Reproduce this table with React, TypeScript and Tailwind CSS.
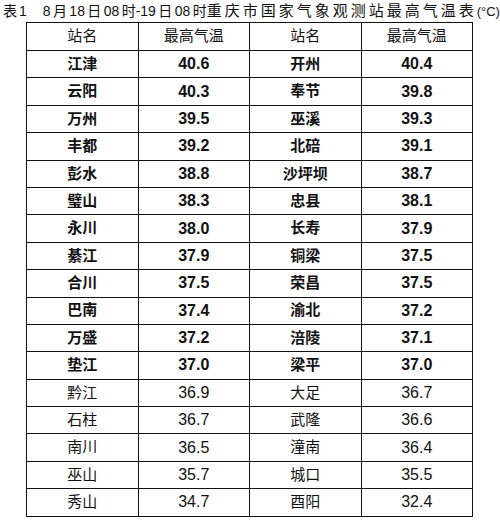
import React from "react";

const rows: [string, string, string, string, boolean][] = [
  ["江津", "40.6", "开州", "40.4", true],
  ["云阳", "40.3", "奉节", "39.8", true],
  ["万州", "39.5", "巫溪", "39.3", true],
  ["丰都", "39.2", "北碚", "39.1", true],
  ["彭水", "38.8", "沙坪坝", "38.7", true],
  ["璧山", "38.3", "忠县", "38.1", true],
  ["永川", "38.0", "长寿", "37.9", true],
  ["綦江", "37.9", "铜梁", "37.5", true],
  ["合川", "37.5", "荣昌", "37.5", true],
  ["巴南", "37.4", "渝北", "37.2", true],
  ["万盛", "37.2", "涪陵", "37.1", true],
  ["垫江", "37.0", "梁平", "37.0", true],
  ["黔江", "36.9", "大足", "36.7", false],
  ["石柱", "36.7", "武隆", "36.6", false],
  ["南川", "36.5", "潼南", "36.4", false],
  ["巫山", "35.7", "城口", "35.5", false],
  ["秀山", "34.7", "酉阳", "32.4", false],
];

const cell = "border border-[#111] p-0";

export default function App() {
  return (
    <div
      className="w-[500px] h-[525px] bg-white text-[#111] overflow-hidden"
      style={{ fontFamily: '"Liberation Sans", "Noto Sans CJK SC", sans-serif' }}
    >
      <div className="h-[22px] pl-[3px] text-[14px] leading-[22px] whitespace-nowrap">
        <span>表</span>
        <span className="ml-[2px]">1</span>
        <span className="ml-[16px] [word-spacing:-1.5px]">8 月 18 日 08 时-19 日 08 时</span>
        <span className="text-[15px] tracking-[3px]">重庆市国家气象观测站最高气温表</span>
        <span className="text-[13px]">(°C)</span>
      </div>
      <table className="ml-[26px] w-[447px] table-fixed border-collapse text-center">
        <tbody>
          <tr className="h-[28px] text-[15px]">
            <td className={cell}>站名</td>
            <td className={cell}>最高气温</td>
            <td className={cell}>站名</td>
            <td className={cell}>最高气温</td>
          </tr>
          {rows.map((r, i) => (
            <tr key={i} className={`h-[27.4px] ${r[4] ? "font-bold" : "font-normal"}`}>
              <td className={`${cell} text-[15px]`}>{r[0]}</td>
              <td className={`${cell} text-[16px]`}>{r[1]}</td>
              <td className={`${cell} text-[15px]`}>{r[2]}</td>
              <td className={`${cell} text-[16px]`}>{r[3]}</td>
            </tr>
          ))}
        </tbody>
      </table>
    </div>
  );
}
